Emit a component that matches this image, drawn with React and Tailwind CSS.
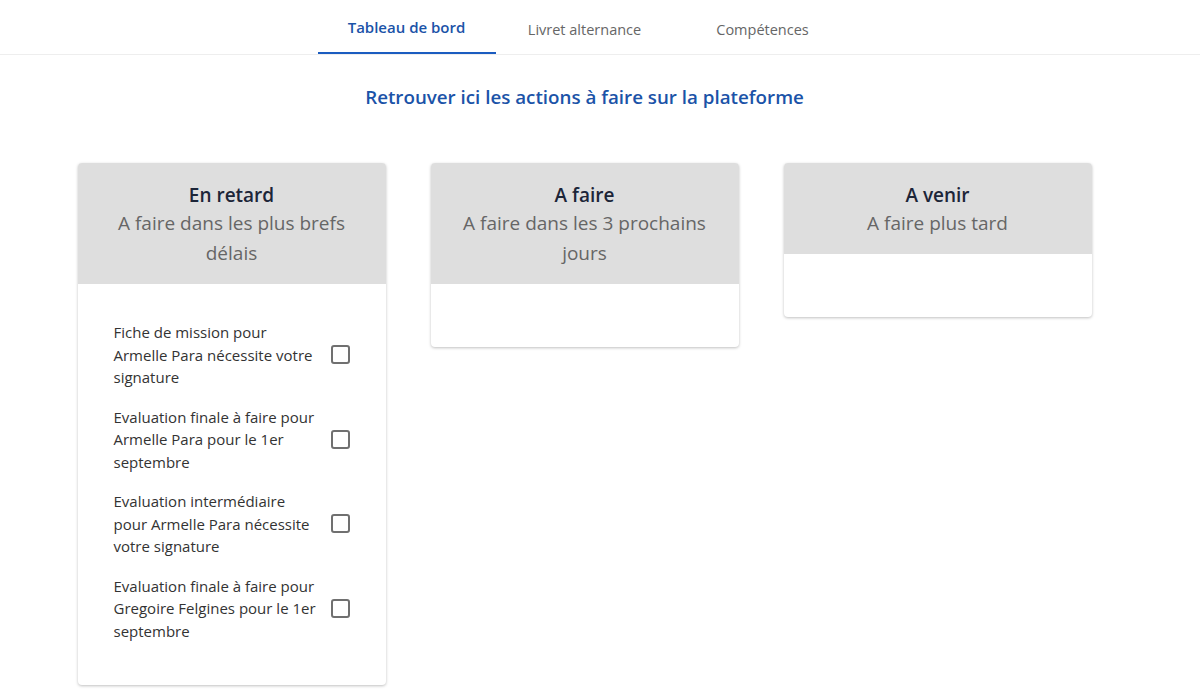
import React, { useState } from 'react';

const tabs = ['Tableau de bord', 'Livret alternance', 'Compétences'];

const columns = [
    { title: 'En retard', subtitle: 'A faire dans les plus brefs délais', items: [
        'Fiche de mission pour Armelle Para nécessite votre signature',
        'Evaluation finale à faire pour Armelle Para pour le 1er septembre',
        'Evaluation intermédiaire pour Armelle Para nécessite votre signature',
        'Evaluation finale à faire pour Gregoire Felgines pour le 1er septembre',
    ] },
    { title: 'A faire', subtitle: 'A faire dans les 3 prochains jours', items: [] },
    { title: 'A venir', subtitle: 'A faire plus tard', items: [] },
];

const TaskItem = ({ label }) => {
    const [checked, setChecked] = useState(false);
    return (
        <div className="flex items-center">
            <p className="w-[205px] text-[15px] leading-[22.5px] text-[#333]">{label}</p>
            <button
                type="button"
                onClick={() => setChecked(!checked)}
                className="ml-[12px] w-[19px] h-[19px] rounded-[3px] border-2 border-[#707070] bg-white flex items-center justify-center"
            >
                {checked && <span className="w-[9px] h-[9px] bg-[#707070]" />}
            </button>
        </div>
    );
};

const Column = ({ title, subtitle, items }) => (
    <div className="w-[308px] rounded-[4px] bg-white shadow-[0_1px_3px_rgba(0,0,0,0.25)] overflow-hidden">
        <div className="bg-[#dedede] px-[24px] pt-[19px] pb-[16px] text-center">
            <h3 className="text-[19px] leading-[26px] font-semibold text-[#1c2538]">{title}</h3>
            <p className="text-[19px] leading-[30px] text-[#666]">{subtitle}</p>
        </div>
        {items.length > 0 ? (
            <div className="pl-[36px] pt-[37px] pb-[43px] flex flex-col gap-[17px]">
                {items.map((item) => <TaskItem key={item} label={item} />)}
            </div>
        ) : (
            <div className="h-[63px]" />
        )}
    </div>
);

export default function App() {
    const [active, setActive] = useState(0);
    return (
        <div className="min-h-screen bg-white" style={{ fontFamily: '"Open Sans", "Noto Sans", sans-serif' }}>
            <nav className="border-b border-[#eee]">
                <div className="w-[1169px] flex justify-center">
                    {tabs.map((tab, i) => (
                        <button
                            key={tab}
                            type="button"
                            onClick={() => setActive(i)}
                            className={
                                i === active
                                    ? 'w-[178px] h-[54px] pt-[2px] border-b-2 border-[#1b5cc0] text-[15px] font-semibold text-[#1b53a8]'
                                    : 'w-[178px] h-[54px] pt-[6px] text-[14.5px] text-[#666]'
                            }
                        >
                            {tab}
                        </button>
                    ))}
                </div>
            </nav>
            <div className="w-[1169px]">
                <h2 className="mt-[28px] text-center text-[18.75px] leading-[28px] font-semibold text-[#1b53a8]">
                    Retrouver ici les actions à faire sur la plateforme
                </h2>
                <div className="mt-[52px] flex justify-center items-start gap-[45px]">
                    {columns.map((col) => <Column key={col.title} {...col} />)}
                </div>
            </div>
        </div>
    );
}
